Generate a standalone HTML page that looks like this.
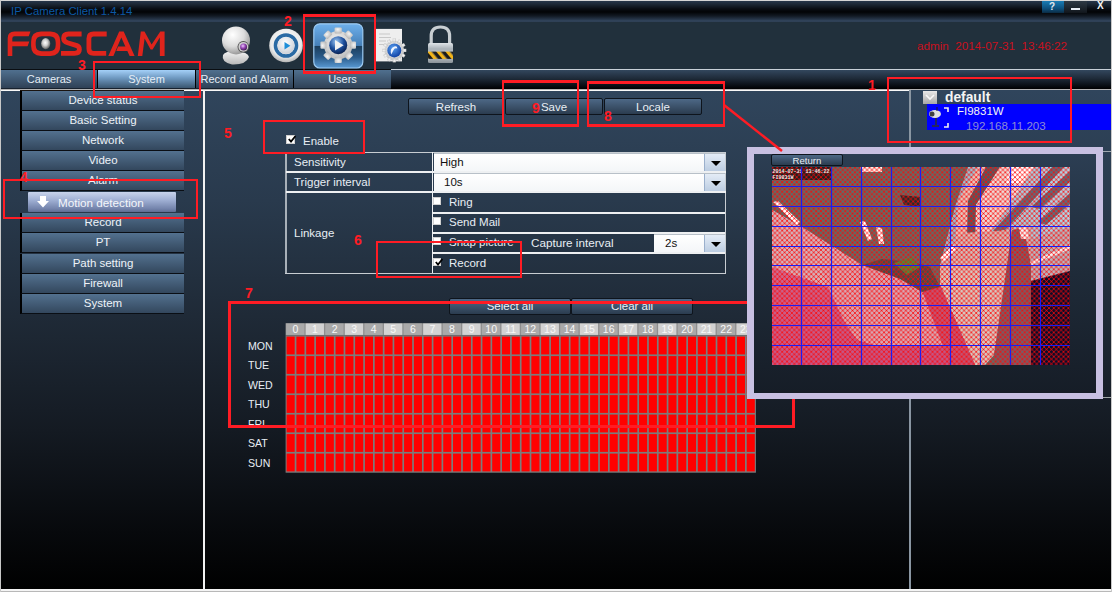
<!DOCTYPE html><html><head><meta charset="utf-8"><style>
*{margin:0;padding:0;box-sizing:border-box}
html,body{width:1112px;height:592px;overflow:hidden;background:#000}
body{position:relative;font-family:"Liberation Sans",sans-serif;font-size:11px;color:#e8eef4}
.a{position:absolute}
.t{position:absolute;white-space:nowrap;line-height:1}
.tab{position:absolute;top:70px;height:18px;background:linear-gradient(#50708f,#2f4156);color:#e6eef6;text-align:center;line-height:18px;font-size:11px;overflow:visible;white-space:nowrap}
.sbtn{position:absolute;left:20px;width:164px;height:20px;background:linear-gradient(#53718f,#33475d);border-left:2px solid #000;border-bottom:1px solid #0a0e14;color:#eef3f8;text-align:center;line-height:19px;font-size:11.5px}
.btn{position:absolute;background:linear-gradient(#4d6886,#2b3c4f);border:1px solid #0e141c;border-radius:2px;color:#e8eef4;text-align:center;font-size:11.5px;white-space:nowrap}
.rb{position:absolute;border:2px solid #ff1c24}
.rn{position:absolute;color:#ff1c24;font-weight:bold;font-size:14px;line-height:1;white-space:nowrap}
.ln{position:absolute;background:#eef0f2}
.sel{position:absolute;background:linear-gradient(#ffffff,#f4f6f8);border-top:1px solid #b8c0c8;color:#101010;font-size:11.5px;line-height:17px}
.dd{position:absolute;top:0;right:0;width:21px;bottom:0;background:linear-gradient(#e4ecf6,#bccde2);border-left:1px solid #9bb0cc}
.dd:after{content:"";position:absolute;left:6px;top:7px;border-left:5px solid transparent;border-right:5px solid transparent;border-top:5px solid #000}
.cb{position:absolute;width:9px;height:9px;background:#fff;border:1px solid #d0d0d0}
.ck{position:absolute;left:1px;top:-1px;width:8px;height:8px}
</style></head><body>
<div class="a" style="left:0;top:90px;width:1112px;height:502px;background:linear-gradient(#30455c 0%,#293a4d 22%,#1f2a37 45%,#141a22 68%,#07090c 88%,#000 100%)"></div>
<div class="a" style="left:0;top:0;width:1112px;height:22px;background:linear-gradient(#293a4f 0px,#1c2836 4px,#080c12 9px,#020406 12px,#121a24 16px,#2a3b50 20px,#34475f 21px,#2a3a4e 22px)"></div>
<div class="t" style="left:11px;top:6px;color:#0b58a4;font-size:11.4px">IP Camera Client 1.4.14</div>
<div class="a" style="left:0;top:22px;width:1112px;height:47px;background:#21303c"></div>
<div class="a" style="left:1042px;top:1px;width:22px;height:12px;background:linear-gradient(#1a7cb4,#0d5280 60%,#0b2c44)"></div>
<div class="t" style="left:1049px;top:2px;color:#e0e8f0;font-size:10px;font-weight:bold">?</div>
<div class="a" style="left:1064px;top:1px;width:23px;height:12px;background:linear-gradient(#2e3a46,#11161c)"></div>
<div class="a" style="left:1071px;top:8px;width:9px;height:2px;background:#e8eef4"></div>
<div class="t" style="left:1097px;top:1px;color:#f4f4f4;font-size:10px;font-weight:bold">X</div>
<svg class="a" style="left:0;top:0" width="170" height="62" viewBox="0 0 170 62">
<defs><radialGradient id="lg" cx="0.45" cy="0.42" r="0.55"><stop offset="0" stop-color="#ffffff"/><stop offset="0.5" stop-color="#d0d0d0"/><stop offset="1" stop-color="#6a6a6a"/></radialGradient></defs>
<g fill="#e0241c">
<path d="M7.7 55.9 L12.3 55.9 L12.3 46.3 L27.6 46.3 L29.3 41.6 L12.3 41.6 L12.3 38.5 Q12.3 36.3 14.5 36.3 L28.7 36.3 L30.5 31.5 L14.5 31.5 Q7.7 31.5 7.7 38 Z"/>
<path fill-rule="evenodd" d="M41 31.5 H50.5 Q60.3 31.5 60.3 41.5 V46 Q60.3 55.9 50.5 55.9 H41 Q31.1 55.9 31.1 46 V41.5 Q31.1 31.5 41 31.5 Z M42 36.2 Q35.7 36.2 35.7 42.5 V45 Q35.7 51.2 42 51.2 H49.5 Q55.7 51.2 55.7 45 V42.5 Q55.7 36.2 49.5 36.2 Z"/>
<path d="M137.8 55.9 L142.3 55.9 L144.6 38.6 L150.6 49.6 L152.6 49.6 L159.8 37.6 L159.9 55.9 L164.6 55.9 L164.6 31.5 L160.3 31.5 L151.6 44.6 L144.5 31.5 L140.8 31.5 Z"/>
<path d="M108.3 55.9 L113.4 55.9 L121.3 37.6 L129.6 55.9 L134.6 55.9 L123.7 31.5 L119.2 31.5 Z"/>
<path d="M116.3 50.9 L118.1 46.6 L127.6 46.6 L129.4 50.9 Z"/>
</g>
<g fill="none" stroke="#e0241c" stroke-width="4.8">
<path d="M81.6 34 H68.5 Q63.6 34 63.6 38.3 Q63.6 41.6 67.5 42.8 L76.8 45.6 Q79.4 46.6 79.4 49.6 Q79.4 53.4 74.5 53.4 H61"/>
<path d="M106.7 34 H93.5 Q88.9 34 88.9 38.6 V48.8 Q88.9 53.4 93.5 53.4 H106.2"/>
</g>
<ellipse cx="45.7" cy="43.6" rx="4.6" ry="5.6" fill="url(#lg)"/>
</svg>
<svg class="a" style="left:215px;top:22px" width="40" height="46" viewBox="215 22 40 46">
<defs><radialGradient id="wc" cx="0.38" cy="0.3" r="0.75"><stop offset="0" stop-color="#ffffff"/><stop offset="0.55" stop-color="#dcdcdc"/><stop offset="1" stop-color="#909090"/></radialGradient>
<linearGradient id="wb" x1="0" y1="0" x2="0" y2="1"><stop offset="0" stop-color="#f4f4f4"/><stop offset="1" stop-color="#b8b8b8"/></linearGradient>
<radialGradient id="wl" cx="0.4" cy="0.35" r="0.7"><stop offset="0" stop-color="#f0c8ff"/><stop offset="0.5" stop-color="#9040b0"/><stop offset="1" stop-color="#3a1848"/></radialGradient></defs>
<path d="M223 55 Q221 62 232 64.5 Q246 65 249 57 Q248 52 236 51 Q225 51 223 55 Z" fill="url(#wb)"/>
<circle cx="236" cy="40.4" r="14" fill="url(#wc)"/>
<circle cx="243.3" cy="46.8" r="5.8" fill="#505050"/><circle cx="243.3" cy="46.8" r="4.9" fill="#d0d0d0"/><circle cx="243.6" cy="47" r="3.5" fill="url(#wl)"/>
</svg>
<svg class="a" style="left:266px;top:26px" width="40" height="40" viewBox="266 26 40 40">
<defs><radialGradient id="pd" cx="0.5" cy="0.4" r="0.6"><stop offset="0" stop-color="#ffffff"/><stop offset="0.75" stop-color="#eaeaea"/><stop offset="1" stop-color="#b4b4b4"/></radialGradient>
<radialGradient id="pi" cx="0.45" cy="0.35" r="0.7"><stop offset="0" stop-color="#ffffff"/><stop offset="1" stop-color="#c8ccd4"/></radialGradient></defs>
<circle cx="286" cy="45.5" r="16.8" fill="url(#pd)"/>
<circle cx="286" cy="45.5" r="10.5" fill="none" stroke="#2a6aa4" stroke-width="3.6"/>
<circle cx="286" cy="45.5" r="8.6" fill="url(#pi)"/>
<path d="M284.5 42 L290.4 45.7 L284.5 49.4 Z" fill="#1e8ed8"/>
</svg>
<svg class="a" style="left:312px;top:22px" width="52" height="48" viewBox="312 22 52 48">
<defs><linearGradient id="gb" x1="0" y1="0" x2="0" y2="1"><stop offset="0" stop-color="#6eb0ec"/><stop offset="0.49" stop-color="#4680b8"/><stop offset="0.51" stop-color="#1c3e5c"/><stop offset="0.75" stop-color="#2a5a88"/><stop offset="1" stop-color="#5a9ad4"/></linearGradient>
<radialGradient id="gc" cx="0.4" cy="0.3" r="0.75"><stop offset="0" stop-color="#9cc8f4"/><stop offset="0.55" stop-color="#1c4e9c"/><stop offset="1" stop-color="#081c48"/></radialGradient>
<radialGradient id="gg" cx="0.45" cy="0.35" r="0.7"><stop offset="0" stop-color="#f4f4f4"/><stop offset="1" stop-color="#b8b8b8"/></radialGradient></defs>
<rect x="313.8" y="23.8" width="49" height="44.2" rx="6" fill="url(#gb)" stroke="#9ccaf2" stroke-width="1.2"/>
<g transform="translate(338.2,45.2)" fill="url(#gg)">
<circle r="14.2"/>
<g id="tooth"><rect x="-3.6" y="-17.8" width="7.2" height="6" rx="1"/></g>
<use href="#tooth" transform="rotate(45)"/><use href="#tooth" transform="rotate(90)"/><use href="#tooth" transform="rotate(135)"/>
<use href="#tooth" transform="rotate(180)"/><use href="#tooth" transform="rotate(225)"/><use href="#tooth" transform="rotate(270)"/><use href="#tooth" transform="rotate(315)"/>
<circle r="9" fill="url(#gc)"/>
<path d="M-3.2 -5.2 L5.5 0 L-3.2 5.2 Z" fill="#f2f2f2"/>
</g>
</svg>
<svg class="a" style="left:372px;top:24px" width="40" height="42" viewBox="372 24 40 42">
<defs><radialGradient id="dg" cx="0.45" cy="0.4" r="0.6"><stop offset="0" stop-color="#f8f8f8"/><stop offset="1" stop-color="#c4c4c4"/></radialGradient>
<radialGradient id="db" cx="0.4" cy="0.35" r="0.7"><stop offset="0" stop-color="#5aa0f0"/><stop offset="1" stop-color="#0c3ca0"/></radialGradient></defs>
<rect x="376" y="28.9" width="26" height="32.5" fill="#eeeeee"/>
<g stroke="#b8b8b8" stroke-width="0.7"><path d="M379 34H390M379 37.5H391M379 41H386M379 44.5H384"/></g>
<g transform="translate(394.3,50.4)" fill="url(#dg)"><circle r="10"/>
<g id="dt"><rect x="-1.6" y="-12" width="3.2" height="4"/></g>
<use href="#dt" transform="rotate(30)"/><use href="#dt" transform="rotate(60)"/><use href="#dt" transform="rotate(90)"/><use href="#dt" transform="rotate(120)"/><use href="#dt" transform="rotate(150)"/><use href="#dt" transform="rotate(180)"/><use href="#dt" transform="rotate(210)"/><use href="#dt" transform="rotate(240)"/><use href="#dt" transform="rotate(270)"/><use href="#dt" transform="rotate(300)"/><use href="#dt" transform="rotate(330)"/>
<circle r="7" fill="url(#db)"/><path d="M-3 4 Q-5 -2 0 -4 Q3 -5 3 -2 Q0 -3 -1 0 Q-2 2 -3 4 Z" fill="#f0f4ff"/></g>
</svg>
<svg class="a" style="left:426px;top:24px" width="30" height="42" viewBox="426 24 30 42">
<defs><linearGradient id="lk" x1="0" y1="0" x2="0" y2="1"><stop offset="0" stop-color="#dfe4e8"/><stop offset="0.3" stop-color="#aab2b8"/><stop offset="0.6" stop-color="#c8ced2"/><stop offset="1" stop-color="#8a9298"/></linearGradient>
<linearGradient id="ls" x1="0" y1="0" x2="1" y2="0"><stop offset="0" stop-color="#c8d0d4"/><stop offset="0.5" stop-color="#eef2f4"/><stop offset="1" stop-color="#a0a8ac"/></linearGradient>
<pattern id="hz" width="7" height="7" patternUnits="userSpaceOnUse" patternTransform="rotate(-40)"><rect width="3.5" height="7" fill="#f2b418"/><rect x="3.5" width="3.5" height="7" fill="#1c1c1c"/></pattern></defs>
<path d="M431.2 44 V36 Q431.2 27 440.5 27 Q449.6 27 449.6 36 V44" fill="none" stroke="#c8ced2" stroke-width="3.2"/>
<rect x="428" y="43" width="25" height="20" rx="1.5" fill="url(#lk)"/>
<rect x="428" y="51.6" width="25" height="7.3" fill="url(#hz)"/>
</svg>
<div class="t" style="left:917px;top:40px;color:#c8101e;font-size:11.7px">admin&nbsp;&nbsp;2014-07-31&nbsp;&nbsp;13:46:22</div>
<div class="a" style="left:0;top:69px;width:391px;height:1px;background:#0a0e12"></div>
<div class="a" style="left:391px;top:69px;width:721px;height:1px;background:#c8d0d8"></div>
<div class="a" style="left:391px;top:70px;width:721px;height:19px;background:linear-gradient(#33475e,#1e2a38 45%,#05080c 90%,#000)"></div>
<div class="tab" style="left:1px;width:96px">Cameras</div>
<div class="a" style="left:97px;top:70px;width:1px;height:18px;background:#000"></div>
<div class="tab" style="left:98px;width:97px;background:linear-gradient(#a4d0f8,#6e98c0 45%,#3a566f)">System</div>
<div class="a" style="left:195px;top:70px;width:1px;height:18px;background:#000"></div>
<div class="tab" style="left:196px;width:97px">Record and Alarm</div>
<div class="a" style="left:293px;top:70px;width:1px;height:18px;background:#000"></div>
<div class="tab" style="left:294px;width:97px">Users</div>
<div class="a" style="left:0;top:88px;width:391px;height:1px;background:#18222e"></div>
<div class="a" style="left:0;top:89px;width:1111px;height:1px;background:#b4b4b4"></div>
<div class="a" style="left:184px;top:90px;width:726px;height:1px;background:#f8f8f8"></div>
<div class="a" style="left:1px;top:90px;width:20px;height:1px;background:#f8f8f8"></div>
<div class="a" style="left:20px;top:90px;width:164px;height:1px;background:#1a1410"></div>
<div class="a" style="left:203px;top:90px;width:2px;height:499px;background:#f2f2f2"></div>
<div class="a" style="left:909px;top:90px;width:2px;height:499px;background:#8a96a2"></div>
<div class="sbtn" style="top:91px">Device status</div>
<div class="sbtn" style="top:111px">Basic Setting</div>
<div class="sbtn" style="top:131px">Network</div>
<div class="sbtn" style="top:151px">Video</div>
<div class="sbtn" style="top:171px">Alarm</div>
<div class="sbtn" style="top:213px">Record</div>
<div class="sbtn" style="top:233px">PT</div>
<div class="sbtn" style="top:254px">Path setting</div>
<div class="sbtn" style="top:274px">Firewall</div>
<div class="sbtn" style="top:294px">System</div>
<div class="a" style="left:28px;top:192px;width:148px;height:20px;background:linear-gradient(#c8d4ec,#a0b0d4 40%,#7282aa 85%,#5c6c90);border-radius:1px"></div>
<svg class="a" style="left:36px;top:195px" width="14" height="14" viewBox="0 0 14 14"><path d="M4 1 H10 V6 H13 L7 12.5 L1 6 H4 Z" fill="#fff"/></svg>
<div class="t" style="left:58px;top:197px;color:#f4f6fa;font-size:11.7px">Motion detection</div>
<div class="a" style="left:0;top:589px;width:1112px;height:2px;background:#f4f4f4"></div>
<div class="a" style="left:0;top:591px;width:1112px;height:1px;background:#b8b8b8"></div>
<div class="a" style="left:0;top:0;width:1112px;height:1px;background:#d4d4d4"></div>
<div class="a" style="left:0;top:0;width:1px;height:592px;background:#c8c8c8"></div>
<div class="a" style="left:1111px;top:0;width:1px;height:592px;background:#c8c8c8"></div>
<div class="btn" style="left:408px;top:98px;width:96px;height:17px;line-height:16px;font-size:11.5px">Refresh</div>
<div class="btn" style="left:505px;top:98px;width:98px;height:17px;line-height:16px;font-size:11.5px">Save</div>
<div class="btn" style="left:604px;top:98px;width:98px;height:17px;line-height:16px;font-size:11.5px">Locale</div>
<div class="cb" style="left:286px;top:135px"><svg class="ck" viewBox="0 0 8 8"><path d="M0.8 4 L3 6.5 L7.5 1" fill="none" stroke="#000" stroke-width="1.8"/></svg></div>
<div class="t" style="left:303px;top:136px;font-size:11.5px">Enable</div>
<div class="a" style="left:285px;top:152px;width:441px;height:1px;background:#c8cdd2"></div>
<div class="a" style="left:285px;top:152px;width:2px;height:122px;background:#a8b0b8"></div>
<div class="a" style="left:725px;top:152px;width:1px;height:122px;background:#c8cdd2"></div>
<div class="a" style="left:285px;top:273px;width:441px;height:1px;background:#c8cdd2"></div>
<div class="a" style="left:432px;top:152px;width:1px;height:121px;background:#eef0f2"></div>
<div class="ln" style="left:286px;top:171px;width:440px;height:2px"></div>
<div class="ln" style="left:286px;top:191px;width:440px;height:2px"></div>
<div class="ln" style="left:432px;top:212px;width:293px;height:2px"></div>
<div class="ln" style="left:432px;top:232px;width:293px;height:2px"></div>
<div class="ln" style="left:432px;top:252px;width:293px;height:2px"></div>
<div class="t" style="left:294px;top:157px;font-size:11.5px">Sensitivity</div>
<div class="t" style="left:294px;top:177px;font-size:11.5px">Trigger interval</div>
<div class="t" style="left:294px;top:228px;font-size:11.5px">Linkage</div>
<div class="sel" style="left:434px;top:153px;width:291px;height:18px"><span style="position:absolute;left:6px;top:0">High</span><div class="dd"></div></div>
<div class="sel" style="left:434px;top:173px;width:291px;height:18px"><span style="position:absolute;left:10px;top:0">10s</span><div class="dd"></div></div>
<div class="sel" style="left:654px;top:234px;width:71px;height:18px"><span style="position:absolute;left:11px;top:0">2s</span><div class="dd"></div></div>
<div class="cb" style="left:433px;top:197px;width:8px;height:8px"></div>
<div class="t" style="left:449px;top:197px;font-size:11.5px">Ring</div>
<div class="cb" style="left:433px;top:217px;width:8px;height:8px"></div>
<div class="t" style="left:449px;top:217px;font-size:11.5px">Send Mail</div>
<div class="cb" style="left:433px;top:237px;width:8px;height:8px"></div>
<div class="t" style="left:449px;top:237px;font-size:11.5px">Snap picture</div>
<div class="cb" style="left:433px;top:258px;width:8px;height:8px"><svg class="ck" viewBox="0 0 8 8"><path d="M0.8 4 L3 6.5 L7.5 1" fill="none" stroke="#000" stroke-width="1.8"/></svg></div>
<div class="t" style="left:449px;top:258px;font-size:11.5px">Record</div>
<div class="t" style="left:531px;top:237px;font-size:11.7px">Capture interval</div>
<div class="btn" style="left:449px;top:298px;width:122px;height:17px;line-height:15px;font-size:11.5px">Select all</div>
<div class="btn" style="left:571px;top:298px;width:122px;height:17px;line-height:15px;font-size:11.5px">Clear all</div>
<svg class="a" style="left:0;top:0" width="1112" height="592" viewBox="0 0 1112 592"><rect x="285.6" y="323.2" width="469.91999999999996" height="12" fill="#8e8e8e"/><rect x="286.10" y="323.5" width="18.28" height="11.4" fill="#a9a9a9"/><text x="295.39" y="333.4" font-family="Liberation Sans" font-size="10.5" fill="#f8f8f8" text-anchor="middle">0</text><rect x="305.68" y="323.5" width="18.28" height="11.4" fill="#d2d2d2"/><text x="314.97" y="333.4" font-family="Liberation Sans" font-size="10.5" fill="#f8f8f8" text-anchor="middle">1</text><rect x="325.26" y="323.5" width="18.28" height="11.4" fill="#a9a9a9"/><text x="334.55" y="333.4" font-family="Liberation Sans" font-size="10.5" fill="#f8f8f8" text-anchor="middle">2</text><rect x="344.84" y="323.5" width="18.28" height="11.4" fill="#d2d2d2"/><text x="354.13" y="333.4" font-family="Liberation Sans" font-size="10.5" fill="#f8f8f8" text-anchor="middle">3</text><rect x="364.42" y="323.5" width="18.28" height="11.4" fill="#a9a9a9"/><text x="373.71" y="333.4" font-family="Liberation Sans" font-size="10.5" fill="#f8f8f8" text-anchor="middle">4</text><rect x="384.00" y="323.5" width="18.28" height="11.4" fill="#d2d2d2"/><text x="393.29" y="333.4" font-family="Liberation Sans" font-size="10.5" fill="#f8f8f8" text-anchor="middle">5</text><rect x="403.58" y="323.5" width="18.28" height="11.4" fill="#a9a9a9"/><text x="412.87" y="333.4" font-family="Liberation Sans" font-size="10.5" fill="#f8f8f8" text-anchor="middle">6</text><rect x="423.16" y="323.5" width="18.28" height="11.4" fill="#d2d2d2"/><text x="432.45" y="333.4" font-family="Liberation Sans" font-size="10.5" fill="#f8f8f8" text-anchor="middle">7</text><rect x="442.74" y="323.5" width="18.28" height="11.4" fill="#a9a9a9"/><text x="452.03" y="333.4" font-family="Liberation Sans" font-size="10.5" fill="#f8f8f8" text-anchor="middle">8</text><rect x="462.32" y="323.5" width="18.28" height="11.4" fill="#d2d2d2"/><text x="471.61" y="333.4" font-family="Liberation Sans" font-size="10.5" fill="#f8f8f8" text-anchor="middle">9</text><rect x="481.90" y="323.5" width="18.28" height="11.4" fill="#a9a9a9"/><text x="491.19" y="333.4" font-family="Liberation Sans" font-size="10.5" fill="#f8f8f8" text-anchor="middle">10</text><rect x="501.48" y="323.5" width="18.28" height="11.4" fill="#d2d2d2"/><text x="510.77" y="333.4" font-family="Liberation Sans" font-size="10.5" fill="#f8f8f8" text-anchor="middle">11</text><rect x="521.06" y="323.5" width="18.28" height="11.4" fill="#a9a9a9"/><text x="530.35" y="333.4" font-family="Liberation Sans" font-size="10.5" fill="#f8f8f8" text-anchor="middle">12</text><rect x="540.64" y="323.5" width="18.28" height="11.4" fill="#d2d2d2"/><text x="549.93" y="333.4" font-family="Liberation Sans" font-size="10.5" fill="#f8f8f8" text-anchor="middle">13</text><rect x="560.22" y="323.5" width="18.28" height="11.4" fill="#a9a9a9"/><text x="569.51" y="333.4" font-family="Liberation Sans" font-size="10.5" fill="#f8f8f8" text-anchor="middle">14</text><rect x="579.80" y="323.5" width="18.28" height="11.4" fill="#d2d2d2"/><text x="589.09" y="333.4" font-family="Liberation Sans" font-size="10.5" fill="#f8f8f8" text-anchor="middle">15</text><rect x="599.38" y="323.5" width="18.28" height="11.4" fill="#a9a9a9"/><text x="608.67" y="333.4" font-family="Liberation Sans" font-size="10.5" fill="#f8f8f8" text-anchor="middle">16</text><rect x="618.96" y="323.5" width="18.28" height="11.4" fill="#d2d2d2"/><text x="628.25" y="333.4" font-family="Liberation Sans" font-size="10.5" fill="#f8f8f8" text-anchor="middle">17</text><rect x="638.54" y="323.5" width="18.28" height="11.4" fill="#a9a9a9"/><text x="647.83" y="333.4" font-family="Liberation Sans" font-size="10.5" fill="#f8f8f8" text-anchor="middle">18</text><rect x="658.12" y="323.5" width="18.28" height="11.4" fill="#d2d2d2"/><text x="667.41" y="333.4" font-family="Liberation Sans" font-size="10.5" fill="#f8f8f8" text-anchor="middle">19</text><rect x="677.70" y="323.5" width="18.28" height="11.4" fill="#a9a9a9"/><text x="686.99" y="333.4" font-family="Liberation Sans" font-size="10.5" fill="#f8f8f8" text-anchor="middle">20</text><rect x="697.28" y="323.5" width="18.28" height="11.4" fill="#d2d2d2"/><text x="706.57" y="333.4" font-family="Liberation Sans" font-size="10.5" fill="#f8f8f8" text-anchor="middle">21</text><rect x="716.86" y="323.5" width="18.28" height="11.4" fill="#a9a9a9"/><text x="726.15" y="333.4" font-family="Liberation Sans" font-size="10.5" fill="#f8f8f8" text-anchor="middle">22</text><rect x="736.44" y="323.5" width="18.28" height="11.4" fill="#d2d2d2"/><text x="745.73" y="333.4" font-family="Liberation Sans" font-size="10.5" fill="#f8f8f8" text-anchor="middle">23</text><rect x="285.6" y="335.2" width="470.31999999999994" height="137.5" fill="#7c7c7c"/><rect x="286.60" y="336.60" width="8.09" height="17.80" fill="#ff0000"/><rect x="296.39" y="336.60" width="8.09" height="17.80" fill="#ff0000"/><rect x="306.18" y="336.60" width="8.09" height="17.80" fill="#ff0000"/><rect x="315.97" y="336.60" width="8.09" height="17.80" fill="#ff0000"/><rect x="325.76" y="336.60" width="8.09" height="17.80" fill="#ff0000"/><rect x="335.55" y="336.60" width="8.09" height="17.80" fill="#ff0000"/><rect x="345.34" y="336.60" width="8.09" height="17.80" fill="#ff0000"/><rect x="355.13" y="336.60" width="8.09" height="17.80" fill="#ff0000"/><rect x="364.92" y="336.60" width="8.09" height="17.80" fill="#ff0000"/><rect x="374.71" y="336.60" width="8.09" height="17.80" fill="#ff0000"/><rect x="384.50" y="336.60" width="8.09" height="17.80" fill="#ff0000"/><rect x="394.29" y="336.60" width="8.09" height="17.80" fill="#ff0000"/><rect x="404.08" y="336.60" width="8.09" height="17.80" fill="#ff0000"/><rect x="413.87" y="336.60" width="8.09" height="17.80" fill="#ff0000"/><rect x="423.66" y="336.60" width="8.09" height="17.80" fill="#ff0000"/><rect x="433.45" y="336.60" width="8.09" height="17.80" fill="#ff0000"/><rect x="443.24" y="336.60" width="8.09" height="17.80" fill="#ff0000"/><rect x="453.03" y="336.60" width="8.09" height="17.80" fill="#ff0000"/><rect x="462.82" y="336.60" width="8.09" height="17.80" fill="#ff0000"/><rect x="472.61" y="336.60" width="8.09" height="17.80" fill="#ff0000"/><rect x="482.40" y="336.60" width="8.09" height="17.80" fill="#ff0000"/><rect x="492.19" y="336.60" width="8.09" height="17.80" fill="#ff0000"/><rect x="501.98" y="336.60" width="8.09" height="17.80" fill="#ff0000"/><rect x="511.77" y="336.60" width="8.09" height="17.80" fill="#ff0000"/><rect x="521.56" y="336.60" width="8.09" height="17.80" fill="#ff0000"/><rect x="531.35" y="336.60" width="8.09" height="17.80" fill="#ff0000"/><rect x="541.14" y="336.60" width="8.09" height="17.80" fill="#ff0000"/><rect x="550.93" y="336.60" width="8.09" height="17.80" fill="#ff0000"/><rect x="560.72" y="336.60" width="8.09" height="17.80" fill="#ff0000"/><rect x="570.51" y="336.60" width="8.09" height="17.80" fill="#ff0000"/><rect x="580.30" y="336.60" width="8.09" height="17.80" fill="#ff0000"/><rect x="590.09" y="336.60" width="8.09" height="17.80" fill="#ff0000"/><rect x="599.88" y="336.60" width="8.09" height="17.80" fill="#ff0000"/><rect x="609.67" y="336.60" width="8.09" height="17.80" fill="#ff0000"/><rect x="619.46" y="336.60" width="8.09" height="17.80" fill="#ff0000"/><rect x="629.25" y="336.60" width="8.09" height="17.80" fill="#ff0000"/><rect x="639.04" y="336.60" width="8.09" height="17.80" fill="#ff0000"/><rect x="648.83" y="336.60" width="8.09" height="17.80" fill="#ff0000"/><rect x="658.62" y="336.60" width="8.09" height="17.80" fill="#ff0000"/><rect x="668.41" y="336.60" width="8.09" height="17.80" fill="#ff0000"/><rect x="678.20" y="336.60" width="8.09" height="17.80" fill="#ff0000"/><rect x="687.99" y="336.60" width="8.09" height="17.80" fill="#ff0000"/><rect x="697.78" y="336.60" width="8.09" height="17.80" fill="#ff0000"/><rect x="707.57" y="336.60" width="8.09" height="17.80" fill="#ff0000"/><rect x="717.36" y="336.60" width="8.09" height="17.80" fill="#ff0000"/><rect x="727.15" y="336.60" width="8.09" height="17.80" fill="#ff0000"/><rect x="736.94" y="336.60" width="8.09" height="17.80" fill="#ff0000"/><rect x="746.73" y="336.60" width="8.09" height="17.80" fill="#ff0000"/><rect x="286.60" y="356.10" width="8.09" height="17.80" fill="#ff0000"/><rect x="296.39" y="356.10" width="8.09" height="17.80" fill="#ff0000"/><rect x="306.18" y="356.10" width="8.09" height="17.80" fill="#ff0000"/><rect x="315.97" y="356.10" width="8.09" height="17.80" fill="#ff0000"/><rect x="325.76" y="356.10" width="8.09" height="17.80" fill="#ff0000"/><rect x="335.55" y="356.10" width="8.09" height="17.80" fill="#ff0000"/><rect x="345.34" y="356.10" width="8.09" height="17.80" fill="#ff0000"/><rect x="355.13" y="356.10" width="8.09" height="17.80" fill="#ff0000"/><rect x="364.92" y="356.10" width="8.09" height="17.80" fill="#ff0000"/><rect x="374.71" y="356.10" width="8.09" height="17.80" fill="#ff0000"/><rect x="384.50" y="356.10" width="8.09" height="17.80" fill="#ff0000"/><rect x="394.29" y="356.10" width="8.09" height="17.80" fill="#ff0000"/><rect x="404.08" y="356.10" width="8.09" height="17.80" fill="#ff0000"/><rect x="413.87" y="356.10" width="8.09" height="17.80" fill="#ff0000"/><rect x="423.66" y="356.10" width="8.09" height="17.80" fill="#ff0000"/><rect x="433.45" y="356.10" width="8.09" height="17.80" fill="#ff0000"/><rect x="443.24" y="356.10" width="8.09" height="17.80" fill="#ff0000"/><rect x="453.03" y="356.10" width="8.09" height="17.80" fill="#ff0000"/><rect x="462.82" y="356.10" width="8.09" height="17.80" fill="#ff0000"/><rect x="472.61" y="356.10" width="8.09" height="17.80" fill="#ff0000"/><rect x="482.40" y="356.10" width="8.09" height="17.80" fill="#ff0000"/><rect x="492.19" y="356.10" width="8.09" height="17.80" fill="#ff0000"/><rect x="501.98" y="356.10" width="8.09" height="17.80" fill="#ff0000"/><rect x="511.77" y="356.10" width="8.09" height="17.80" fill="#ff0000"/><rect x="521.56" y="356.10" width="8.09" height="17.80" fill="#ff0000"/><rect x="531.35" y="356.10" width="8.09" height="17.80" fill="#ff0000"/><rect x="541.14" y="356.10" width="8.09" height="17.80" fill="#ff0000"/><rect x="550.93" y="356.10" width="8.09" height="17.80" fill="#ff0000"/><rect x="560.72" y="356.10" width="8.09" height="17.80" fill="#ff0000"/><rect x="570.51" y="356.10" width="8.09" height="17.80" fill="#ff0000"/><rect x="580.30" y="356.10" width="8.09" height="17.80" fill="#ff0000"/><rect x="590.09" y="356.10" width="8.09" height="17.80" fill="#ff0000"/><rect x="599.88" y="356.10" width="8.09" height="17.80" fill="#ff0000"/><rect x="609.67" y="356.10" width="8.09" height="17.80" fill="#ff0000"/><rect x="619.46" y="356.10" width="8.09" height="17.80" fill="#ff0000"/><rect x="629.25" y="356.10" width="8.09" height="17.80" fill="#ff0000"/><rect x="639.04" y="356.10" width="8.09" height="17.80" fill="#ff0000"/><rect x="648.83" y="356.10" width="8.09" height="17.80" fill="#ff0000"/><rect x="658.62" y="356.10" width="8.09" height="17.80" fill="#ff0000"/><rect x="668.41" y="356.10" width="8.09" height="17.80" fill="#ff0000"/><rect x="678.20" y="356.10" width="8.09" height="17.80" fill="#ff0000"/><rect x="687.99" y="356.10" width="8.09" height="17.80" fill="#ff0000"/><rect x="697.78" y="356.10" width="8.09" height="17.80" fill="#ff0000"/><rect x="707.57" y="356.10" width="8.09" height="17.80" fill="#ff0000"/><rect x="717.36" y="356.10" width="8.09" height="17.80" fill="#ff0000"/><rect x="727.15" y="356.10" width="8.09" height="17.80" fill="#ff0000"/><rect x="736.94" y="356.10" width="8.09" height="17.80" fill="#ff0000"/><rect x="746.73" y="356.10" width="8.09" height="17.80" fill="#ff0000"/><rect x="286.60" y="375.60" width="8.09" height="17.80" fill="#ff0000"/><rect x="296.39" y="375.60" width="8.09" height="17.80" fill="#ff0000"/><rect x="306.18" y="375.60" width="8.09" height="17.80" fill="#ff0000"/><rect x="315.97" y="375.60" width="8.09" height="17.80" fill="#ff0000"/><rect x="325.76" y="375.60" width="8.09" height="17.80" fill="#ff0000"/><rect x="335.55" y="375.60" width="8.09" height="17.80" fill="#ff0000"/><rect x="345.34" y="375.60" width="8.09" height="17.80" fill="#ff0000"/><rect x="355.13" y="375.60" width="8.09" height="17.80" fill="#ff0000"/><rect x="364.92" y="375.60" width="8.09" height="17.80" fill="#ff0000"/><rect x="374.71" y="375.60" width="8.09" height="17.80" fill="#ff0000"/><rect x="384.50" y="375.60" width="8.09" height="17.80" fill="#ff0000"/><rect x="394.29" y="375.60" width="8.09" height="17.80" fill="#ff0000"/><rect x="404.08" y="375.60" width="8.09" height="17.80" fill="#ff0000"/><rect x="413.87" y="375.60" width="8.09" height="17.80" fill="#ff0000"/><rect x="423.66" y="375.60" width="8.09" height="17.80" fill="#ff0000"/><rect x="433.45" y="375.60" width="8.09" height="17.80" fill="#ff0000"/><rect x="443.24" y="375.60" width="8.09" height="17.80" fill="#ff0000"/><rect x="453.03" y="375.60" width="8.09" height="17.80" fill="#ff0000"/><rect x="462.82" y="375.60" width="8.09" height="17.80" fill="#ff0000"/><rect x="472.61" y="375.60" width="8.09" height="17.80" fill="#ff0000"/><rect x="482.40" y="375.60" width="8.09" height="17.80" fill="#ff0000"/><rect x="492.19" y="375.60" width="8.09" height="17.80" fill="#ff0000"/><rect x="501.98" y="375.60" width="8.09" height="17.80" fill="#ff0000"/><rect x="511.77" y="375.60" width="8.09" height="17.80" fill="#ff0000"/><rect x="521.56" y="375.60" width="8.09" height="17.80" fill="#ff0000"/><rect x="531.35" y="375.60" width="8.09" height="17.80" fill="#ff0000"/><rect x="541.14" y="375.60" width="8.09" height="17.80" fill="#ff0000"/><rect x="550.93" y="375.60" width="8.09" height="17.80" fill="#ff0000"/><rect x="560.72" y="375.60" width="8.09" height="17.80" fill="#ff0000"/><rect x="570.51" y="375.60" width="8.09" height="17.80" fill="#ff0000"/><rect x="580.30" y="375.60" width="8.09" height="17.80" fill="#ff0000"/><rect x="590.09" y="375.60" width="8.09" height="17.80" fill="#ff0000"/><rect x="599.88" y="375.60" width="8.09" height="17.80" fill="#ff0000"/><rect x="609.67" y="375.60" width="8.09" height="17.80" fill="#ff0000"/><rect x="619.46" y="375.60" width="8.09" height="17.80" fill="#ff0000"/><rect x="629.25" y="375.60" width="8.09" height="17.80" fill="#ff0000"/><rect x="639.04" y="375.60" width="8.09" height="17.80" fill="#ff0000"/><rect x="648.83" y="375.60" width="8.09" height="17.80" fill="#ff0000"/><rect x="658.62" y="375.60" width="8.09" height="17.80" fill="#ff0000"/><rect x="668.41" y="375.60" width="8.09" height="17.80" fill="#ff0000"/><rect x="678.20" y="375.60" width="8.09" height="17.80" fill="#ff0000"/><rect x="687.99" y="375.60" width="8.09" height="17.80" fill="#ff0000"/><rect x="697.78" y="375.60" width="8.09" height="17.80" fill="#ff0000"/><rect x="707.57" y="375.60" width="8.09" height="17.80" fill="#ff0000"/><rect x="717.36" y="375.60" width="8.09" height="17.80" fill="#ff0000"/><rect x="727.15" y="375.60" width="8.09" height="17.80" fill="#ff0000"/><rect x="736.94" y="375.60" width="8.09" height="17.80" fill="#ff0000"/><rect x="746.73" y="375.60" width="8.09" height="17.80" fill="#ff0000"/><rect x="286.60" y="395.10" width="8.09" height="17.80" fill="#ff0000"/><rect x="296.39" y="395.10" width="8.09" height="17.80" fill="#ff0000"/><rect x="306.18" y="395.10" width="8.09" height="17.80" fill="#ff0000"/><rect x="315.97" y="395.10" width="8.09" height="17.80" fill="#ff0000"/><rect x="325.76" y="395.10" width="8.09" height="17.80" fill="#ff0000"/><rect x="335.55" y="395.10" width="8.09" height="17.80" fill="#ff0000"/><rect x="345.34" y="395.10" width="8.09" height="17.80" fill="#ff0000"/><rect x="355.13" y="395.10" width="8.09" height="17.80" fill="#ff0000"/><rect x="364.92" y="395.10" width="8.09" height="17.80" fill="#ff0000"/><rect x="374.71" y="395.10" width="8.09" height="17.80" fill="#ff0000"/><rect x="384.50" y="395.10" width="8.09" height="17.80" fill="#ff0000"/><rect x="394.29" y="395.10" width="8.09" height="17.80" fill="#ff0000"/><rect x="404.08" y="395.10" width="8.09" height="17.80" fill="#ff0000"/><rect x="413.87" y="395.10" width="8.09" height="17.80" fill="#ff0000"/><rect x="423.66" y="395.10" width="8.09" height="17.80" fill="#ff0000"/><rect x="433.45" y="395.10" width="8.09" height="17.80" fill="#ff0000"/><rect x="443.24" y="395.10" width="8.09" height="17.80" fill="#ff0000"/><rect x="453.03" y="395.10" width="8.09" height="17.80" fill="#ff0000"/><rect x="462.82" y="395.10" width="8.09" height="17.80" fill="#ff0000"/><rect x="472.61" y="395.10" width="8.09" height="17.80" fill="#ff0000"/><rect x="482.40" y="395.10" width="8.09" height="17.80" fill="#ff0000"/><rect x="492.19" y="395.10" width="8.09" height="17.80" fill="#ff0000"/><rect x="501.98" y="395.10" width="8.09" height="17.80" fill="#ff0000"/><rect x="511.77" y="395.10" width="8.09" height="17.80" fill="#ff0000"/><rect x="521.56" y="395.10" width="8.09" height="17.80" fill="#ff0000"/><rect x="531.35" y="395.10" width="8.09" height="17.80" fill="#ff0000"/><rect x="541.14" y="395.10" width="8.09" height="17.80" fill="#ff0000"/><rect x="550.93" y="395.10" width="8.09" height="17.80" fill="#ff0000"/><rect x="560.72" y="395.10" width="8.09" height="17.80" fill="#ff0000"/><rect x="570.51" y="395.10" width="8.09" height="17.80" fill="#ff0000"/><rect x="580.30" y="395.10" width="8.09" height="17.80" fill="#ff0000"/><rect x="590.09" y="395.10" width="8.09" height="17.80" fill="#ff0000"/><rect x="599.88" y="395.10" width="8.09" height="17.80" fill="#ff0000"/><rect x="609.67" y="395.10" width="8.09" height="17.80" fill="#ff0000"/><rect x="619.46" y="395.10" width="8.09" height="17.80" fill="#ff0000"/><rect x="629.25" y="395.10" width="8.09" height="17.80" fill="#ff0000"/><rect x="639.04" y="395.10" width="8.09" height="17.80" fill="#ff0000"/><rect x="648.83" y="395.10" width="8.09" height="17.80" fill="#ff0000"/><rect x="658.62" y="395.10" width="8.09" height="17.80" fill="#ff0000"/><rect x="668.41" y="395.10" width="8.09" height="17.80" fill="#ff0000"/><rect x="678.20" y="395.10" width="8.09" height="17.80" fill="#ff0000"/><rect x="687.99" y="395.10" width="8.09" height="17.80" fill="#ff0000"/><rect x="697.78" y="395.10" width="8.09" height="17.80" fill="#ff0000"/><rect x="707.57" y="395.10" width="8.09" height="17.80" fill="#ff0000"/><rect x="717.36" y="395.10" width="8.09" height="17.80" fill="#ff0000"/><rect x="727.15" y="395.10" width="8.09" height="17.80" fill="#ff0000"/><rect x="736.94" y="395.10" width="8.09" height="17.80" fill="#ff0000"/><rect x="746.73" y="395.10" width="8.09" height="17.80" fill="#ff0000"/><rect x="286.60" y="414.60" width="8.09" height="17.80" fill="#ff0000"/><rect x="296.39" y="414.60" width="8.09" height="17.80" fill="#ff0000"/><rect x="306.18" y="414.60" width="8.09" height="17.80" fill="#ff0000"/><rect x="315.97" y="414.60" width="8.09" height="17.80" fill="#ff0000"/><rect x="325.76" y="414.60" width="8.09" height="17.80" fill="#ff0000"/><rect x="335.55" y="414.60" width="8.09" height="17.80" fill="#ff0000"/><rect x="345.34" y="414.60" width="8.09" height="17.80" fill="#ff0000"/><rect x="355.13" y="414.60" width="8.09" height="17.80" fill="#ff0000"/><rect x="364.92" y="414.60" width="8.09" height="17.80" fill="#ff0000"/><rect x="374.71" y="414.60" width="8.09" height="17.80" fill="#ff0000"/><rect x="384.50" y="414.60" width="8.09" height="17.80" fill="#ff0000"/><rect x="394.29" y="414.60" width="8.09" height="17.80" fill="#ff0000"/><rect x="404.08" y="414.60" width="8.09" height="17.80" fill="#ff0000"/><rect x="413.87" y="414.60" width="8.09" height="17.80" fill="#ff0000"/><rect x="423.66" y="414.60" width="8.09" height="17.80" fill="#ff0000"/><rect x="433.45" y="414.60" width="8.09" height="17.80" fill="#ff0000"/><rect x="443.24" y="414.60" width="8.09" height="17.80" fill="#ff0000"/><rect x="453.03" y="414.60" width="8.09" height="17.80" fill="#ff0000"/><rect x="462.82" y="414.60" width="8.09" height="17.80" fill="#ff0000"/><rect x="472.61" y="414.60" width="8.09" height="17.80" fill="#ff0000"/><rect x="482.40" y="414.60" width="8.09" height="17.80" fill="#ff0000"/><rect x="492.19" y="414.60" width="8.09" height="17.80" fill="#ff0000"/><rect x="501.98" y="414.60" width="8.09" height="17.80" fill="#ff0000"/><rect x="511.77" y="414.60" width="8.09" height="17.80" fill="#ff0000"/><rect x="521.56" y="414.60" width="8.09" height="17.80" fill="#ff0000"/><rect x="531.35" y="414.60" width="8.09" height="17.80" fill="#ff0000"/><rect x="541.14" y="414.60" width="8.09" height="17.80" fill="#ff0000"/><rect x="550.93" y="414.60" width="8.09" height="17.80" fill="#ff0000"/><rect x="560.72" y="414.60" width="8.09" height="17.80" fill="#ff0000"/><rect x="570.51" y="414.60" width="8.09" height="17.80" fill="#ff0000"/><rect x="580.30" y="414.60" width="8.09" height="17.80" fill="#ff0000"/><rect x="590.09" y="414.60" width="8.09" height="17.80" fill="#ff0000"/><rect x="599.88" y="414.60" width="8.09" height="17.80" fill="#ff0000"/><rect x="609.67" y="414.60" width="8.09" height="17.80" fill="#ff0000"/><rect x="619.46" y="414.60" width="8.09" height="17.80" fill="#ff0000"/><rect x="629.25" y="414.60" width="8.09" height="17.80" fill="#ff0000"/><rect x="639.04" y="414.60" width="8.09" height="17.80" fill="#ff0000"/><rect x="648.83" y="414.60" width="8.09" height="17.80" fill="#ff0000"/><rect x="658.62" y="414.60" width="8.09" height="17.80" fill="#ff0000"/><rect x="668.41" y="414.60" width="8.09" height="17.80" fill="#ff0000"/><rect x="678.20" y="414.60" width="8.09" height="17.80" fill="#ff0000"/><rect x="687.99" y="414.60" width="8.09" height="17.80" fill="#ff0000"/><rect x="697.78" y="414.60" width="8.09" height="17.80" fill="#ff0000"/><rect x="707.57" y="414.60" width="8.09" height="17.80" fill="#ff0000"/><rect x="717.36" y="414.60" width="8.09" height="17.80" fill="#ff0000"/><rect x="727.15" y="414.60" width="8.09" height="17.80" fill="#ff0000"/><rect x="736.94" y="414.60" width="8.09" height="17.80" fill="#ff0000"/><rect x="746.73" y="414.60" width="8.09" height="17.80" fill="#ff0000"/><rect x="286.60" y="434.10" width="8.09" height="17.80" fill="#ff0000"/><rect x="296.39" y="434.10" width="8.09" height="17.80" fill="#ff0000"/><rect x="306.18" y="434.10" width="8.09" height="17.80" fill="#ff0000"/><rect x="315.97" y="434.10" width="8.09" height="17.80" fill="#ff0000"/><rect x="325.76" y="434.10" width="8.09" height="17.80" fill="#ff0000"/><rect x="335.55" y="434.10" width="8.09" height="17.80" fill="#ff0000"/><rect x="345.34" y="434.10" width="8.09" height="17.80" fill="#ff0000"/><rect x="355.13" y="434.10" width="8.09" height="17.80" fill="#ff0000"/><rect x="364.92" y="434.10" width="8.09" height="17.80" fill="#ff0000"/><rect x="374.71" y="434.10" width="8.09" height="17.80" fill="#ff0000"/><rect x="384.50" y="434.10" width="8.09" height="17.80" fill="#ff0000"/><rect x="394.29" y="434.10" width="8.09" height="17.80" fill="#ff0000"/><rect x="404.08" y="434.10" width="8.09" height="17.80" fill="#ff0000"/><rect x="413.87" y="434.10" width="8.09" height="17.80" fill="#ff0000"/><rect x="423.66" y="434.10" width="8.09" height="17.80" fill="#ff0000"/><rect x="433.45" y="434.10" width="8.09" height="17.80" fill="#ff0000"/><rect x="443.24" y="434.10" width="8.09" height="17.80" fill="#ff0000"/><rect x="453.03" y="434.10" width="8.09" height="17.80" fill="#ff0000"/><rect x="462.82" y="434.10" width="8.09" height="17.80" fill="#ff0000"/><rect x="472.61" y="434.10" width="8.09" height="17.80" fill="#ff0000"/><rect x="482.40" y="434.10" width="8.09" height="17.80" fill="#ff0000"/><rect x="492.19" y="434.10" width="8.09" height="17.80" fill="#ff0000"/><rect x="501.98" y="434.10" width="8.09" height="17.80" fill="#ff0000"/><rect x="511.77" y="434.10" width="8.09" height="17.80" fill="#ff0000"/><rect x="521.56" y="434.10" width="8.09" height="17.80" fill="#ff0000"/><rect x="531.35" y="434.10" width="8.09" height="17.80" fill="#ff0000"/><rect x="541.14" y="434.10" width="8.09" height="17.80" fill="#ff0000"/><rect x="550.93" y="434.10" width="8.09" height="17.80" fill="#ff0000"/><rect x="560.72" y="434.10" width="8.09" height="17.80" fill="#ff0000"/><rect x="570.51" y="434.10" width="8.09" height="17.80" fill="#ff0000"/><rect x="580.30" y="434.10" width="8.09" height="17.80" fill="#ff0000"/><rect x="590.09" y="434.10" width="8.09" height="17.80" fill="#ff0000"/><rect x="599.88" y="434.10" width="8.09" height="17.80" fill="#ff0000"/><rect x="609.67" y="434.10" width="8.09" height="17.80" fill="#ff0000"/><rect x="619.46" y="434.10" width="8.09" height="17.80" fill="#ff0000"/><rect x="629.25" y="434.10" width="8.09" height="17.80" fill="#ff0000"/><rect x="639.04" y="434.10" width="8.09" height="17.80" fill="#ff0000"/><rect x="648.83" y="434.10" width="8.09" height="17.80" fill="#ff0000"/><rect x="658.62" y="434.10" width="8.09" height="17.80" fill="#ff0000"/><rect x="668.41" y="434.10" width="8.09" height="17.80" fill="#ff0000"/><rect x="678.20" y="434.10" width="8.09" height="17.80" fill="#ff0000"/><rect x="687.99" y="434.10" width="8.09" height="17.80" fill="#ff0000"/><rect x="697.78" y="434.10" width="8.09" height="17.80" fill="#ff0000"/><rect x="707.57" y="434.10" width="8.09" height="17.80" fill="#ff0000"/><rect x="717.36" y="434.10" width="8.09" height="17.80" fill="#ff0000"/><rect x="727.15" y="434.10" width="8.09" height="17.80" fill="#ff0000"/><rect x="736.94" y="434.10" width="8.09" height="17.80" fill="#ff0000"/><rect x="746.73" y="434.10" width="8.09" height="17.80" fill="#ff0000"/><rect x="286.60" y="453.60" width="8.09" height="17.80" fill="#ff0000"/><rect x="296.39" y="453.60" width="8.09" height="17.80" fill="#ff0000"/><rect x="306.18" y="453.60" width="8.09" height="17.80" fill="#ff0000"/><rect x="315.97" y="453.60" width="8.09" height="17.80" fill="#ff0000"/><rect x="325.76" y="453.60" width="8.09" height="17.80" fill="#ff0000"/><rect x="335.55" y="453.60" width="8.09" height="17.80" fill="#ff0000"/><rect x="345.34" y="453.60" width="8.09" height="17.80" fill="#ff0000"/><rect x="355.13" y="453.60" width="8.09" height="17.80" fill="#ff0000"/><rect x="364.92" y="453.60" width="8.09" height="17.80" fill="#ff0000"/><rect x="374.71" y="453.60" width="8.09" height="17.80" fill="#ff0000"/><rect x="384.50" y="453.60" width="8.09" height="17.80" fill="#ff0000"/><rect x="394.29" y="453.60" width="8.09" height="17.80" fill="#ff0000"/><rect x="404.08" y="453.60" width="8.09" height="17.80" fill="#ff0000"/><rect x="413.87" y="453.60" width="8.09" height="17.80" fill="#ff0000"/><rect x="423.66" y="453.60" width="8.09" height="17.80" fill="#ff0000"/><rect x="433.45" y="453.60" width="8.09" height="17.80" fill="#ff0000"/><rect x="443.24" y="453.60" width="8.09" height="17.80" fill="#ff0000"/><rect x="453.03" y="453.60" width="8.09" height="17.80" fill="#ff0000"/><rect x="462.82" y="453.60" width="8.09" height="17.80" fill="#ff0000"/><rect x="472.61" y="453.60" width="8.09" height="17.80" fill="#ff0000"/><rect x="482.40" y="453.60" width="8.09" height="17.80" fill="#ff0000"/><rect x="492.19" y="453.60" width="8.09" height="17.80" fill="#ff0000"/><rect x="501.98" y="453.60" width="8.09" height="17.80" fill="#ff0000"/><rect x="511.77" y="453.60" width="8.09" height="17.80" fill="#ff0000"/><rect x="521.56" y="453.60" width="8.09" height="17.80" fill="#ff0000"/><rect x="531.35" y="453.60" width="8.09" height="17.80" fill="#ff0000"/><rect x="541.14" y="453.60" width="8.09" height="17.80" fill="#ff0000"/><rect x="550.93" y="453.60" width="8.09" height="17.80" fill="#ff0000"/><rect x="560.72" y="453.60" width="8.09" height="17.80" fill="#ff0000"/><rect x="570.51" y="453.60" width="8.09" height="17.80" fill="#ff0000"/><rect x="580.30" y="453.60" width="8.09" height="17.80" fill="#ff0000"/><rect x="590.09" y="453.60" width="8.09" height="17.80" fill="#ff0000"/><rect x="599.88" y="453.60" width="8.09" height="17.80" fill="#ff0000"/><rect x="609.67" y="453.60" width="8.09" height="17.80" fill="#ff0000"/><rect x="619.46" y="453.60" width="8.09" height="17.80" fill="#ff0000"/><rect x="629.25" y="453.60" width="8.09" height="17.80" fill="#ff0000"/><rect x="639.04" y="453.60" width="8.09" height="17.80" fill="#ff0000"/><rect x="648.83" y="453.60" width="8.09" height="17.80" fill="#ff0000"/><rect x="658.62" y="453.60" width="8.09" height="17.80" fill="#ff0000"/><rect x="668.41" y="453.60" width="8.09" height="17.80" fill="#ff0000"/><rect x="678.20" y="453.60" width="8.09" height="17.80" fill="#ff0000"/><rect x="687.99" y="453.60" width="8.09" height="17.80" fill="#ff0000"/><rect x="697.78" y="453.60" width="8.09" height="17.80" fill="#ff0000"/><rect x="707.57" y="453.60" width="8.09" height="17.80" fill="#ff0000"/><rect x="717.36" y="453.60" width="8.09" height="17.80" fill="#ff0000"/><rect x="727.15" y="453.60" width="8.09" height="17.80" fill="#ff0000"/><rect x="736.94" y="453.60" width="8.09" height="17.80" fill="#ff0000"/><rect x="746.73" y="453.60" width="8.09" height="17.80" fill="#ff0000"/></svg>
<div class="t" style="left:248px;top:340.6px;font-size:10.6px">MON</div>
<div class="t" style="left:248px;top:360.1px;font-size:10.6px">TUE</div>
<div class="t" style="left:248px;top:379.6px;font-size:10.6px">WED</div>
<div class="t" style="left:248px;top:399.1px;font-size:10.6px">THU</div>
<div class="t" style="left:248px;top:418.6px;font-size:10.6px">FRI</div>
<div class="t" style="left:248px;top:438.1px;font-size:10.6px">SAT</div>
<div class="t" style="left:248px;top:457.6px;font-size:10.6px">SUN</div>
<div class="rb" style="left:228px;top:301px;width:567px;height:127px;border-width:3px"></div>
<div class="a" style="left:747px;top:147px;width:356px;height:252px;background:#c8c0e2"></div>
<div class="a" style="left:754px;top:154px;width:342px;height:239px;background:linear-gradient(#2c3e53,#1f2b39 50%,#161d27)"></div>
<div class="btn" style="left:771px;top:154px;width:72px;height:12px;line-height:11px;font-size:9.6px">Return</div>
<svg class="a" style="left:772px;top:167px" width="298" height="198" viewBox="0 0 298 198"><defs>
<pattern id="xh" width="4.85" height="4.85" patternUnits="userSpaceOnUse" x="0.5" y="0.5"><path d="M-1 -1 L5.85 5.85 M5.85 -1 L-1 5.85" stroke="#ff1010" stroke-width="0.7" opacity="0.9"/><circle cx="2.425" cy="2.425" r="0.8" fill="#ff0000"/><circle cx="0" cy="0" r="0.8" fill="#ff0000"/><circle cx="4.85" cy="0" r="0.8" fill="#ff0000"/><circle cx="0" cy="4.85" r="0.8" fill="#ff0000"/><circle cx="4.85" cy="4.85" r="0.8" fill="#ff0000"/></pattern>
<linearGradient id="bedg" x1="0" y1="0" x2="0.3" y2="1"><stop offset="0" stop-color="#d4a0b8"/><stop offset="0.45" stop-color="#cc6088"/><stop offset="1" stop-color="#c45484"/></linearGradient>
<linearGradient id="trg" x1="0" y1="0" x2="1" y2="0"><stop offset="0" stop-color="#98b8c8"/><stop offset="1" stop-color="#b0d4e4"/></linearGradient>
</defs><rect width="298" height="198" fill="#626a64"/><path d="M196 0 L298 0 L298 104 L259 114 L259 98 L168 98 L183 40 Z" fill="url(#trg)"/><path d="M206 0 L214 0 L196 34 L193 98 L182 98 L186 34 Z" fill="#e4c4bc"/><path d="M214 0 L228 0 L204 38 L203 70 L195 70 L196 34 Z" fill="#54585e"/><path d="M228 0 L262 0 L236 40 L216 68 L204 68 L204 38 Z" fill="#ecd8d4"/><path d="M238 0 L262 0 L250 16 L234 16 Z" fill="#ffffff"/><path d="M280 0 L292 0 L242 54 L220 76 L210 76 L232 52 Z" fill="#5c6c7a"/><path d="M298 4 L298 15 L268 42 L259 40 Z" fill="#5c6c7a"/><path d="M298 26 L298 37 L274 58 L266 55 Z" fill="#5c6c7a"/><path d="M185 70 L240 62 L259 60 L259 98 L168 98 Z" fill="#c8b8b8"/><path d="M259 72 L298 60 L298 104 L259 114 Z" fill="#b8b4bc"/><path d="M168 98 L240 98 L222 188 L213 198 L203 198 L168 118 Z" fill="#d6c6be"/><path d="M190 66 L240 63 L238 98 L175 98 Z" fill="#d0bcb8"/><path d="M0 43 L30 60 L60 79 L90 98 L128 112 L150 120 L168 118 L203 198 L0 198 Z" fill="url(#bedg)"/><path d="M0 43 L30 60 L60 79 L90 98 L49 98 L56 120 L0 100 Z" fill="#d4b0b8"/><path d="M49 98 L90 98 L150 118 L155 130 L172 178 L102 178 L85 173 L72 154 L56 120 Z" fill="#d8a4b0"/><path d="M148 118 L168 118 L203 198 L178 198 Z" fill="#c45070"/><path d="M90 98 L110 92 L140 95 L158 100 L168 120 L150 125 L128 112 Z" fill="#4a4a46"/><path d="M122 96 L140 90 L148 100 L135 108 Z" fill="#4a8a3a"/><path d="M240 63 L252 61 L259 98 L259 198 L228 198 L222 188 Z" fill="#7a5a62"/><path d="M247 61 L255 60 L257 72 L249 72 Z" fill="#f4f4f4"/><path d="M259 114 L298 104 L298 198 L259 198 Z" fill="#0c0c28"/><path d="M1 35 L6 34 L28 55 L25 58 Z" fill="#ffffff"/><path d="M88 55 L93 54 L100 72 L96 74 Z" fill="#ffffff"/><path d="M104 60 L110 61 L112 77 L107 77 Z" fill="#f8f8f8"/><path d="M88 0 L110 0 L110 5 L90 5 Z" fill="#f8f0e8"/><path d="M168 91 L181 78 L184 82 L171 95 Z" fill="#ffffff"/><path d="M258 95 L298 78 L298 82 L260 98 Z" fill="#f0f0f0"/><path d="M128 28 L149 30 L149 40 L132 38 Z" fill="#2a2a2a"/><rect x="0" y="0" width="60" height="13" fill="#202020"/><rect width="298" height="198" fill="url(#xh)"/><text x="0.5" y="6" font-family="Liberation Mono" font-size="5" fill="#f4e8e8" font-weight="bold">2014-07-31 13:46:22</text><text x="0.5" y="11.5" font-family="Liberation Mono" font-size="5" fill="#f4e8e8" font-weight="bold">FI9831W</text><line x1="29.5" y1="0" x2="29.5" y2="198" stroke="#1c1cf4" stroke-width="1.2"/><line x1="59.5" y1="0" x2="59.5" y2="198" stroke="#1c1cf4" stroke-width="1.2"/><line x1="89.5" y1="0" x2="89.5" y2="198" stroke="#1c1cf4" stroke-width="1.2"/><line x1="119.5" y1="0" x2="119.5" y2="198" stroke="#1c1cf4" stroke-width="1.2"/><line x1="148.5" y1="0" x2="148.5" y2="198" stroke="#1c1cf4" stroke-width="1.2"/><line x1="178.5" y1="0" x2="178.5" y2="198" stroke="#1c1cf4" stroke-width="1.2"/><line x1="208.5" y1="0" x2="208.5" y2="198" stroke="#1c1cf4" stroke-width="1.2"/><line x1="238.5" y1="0" x2="238.5" y2="198" stroke="#1c1cf4" stroke-width="1.2"/><line x1="268.5" y1="0" x2="268.5" y2="198" stroke="#1c1cf4" stroke-width="1.2"/><line x1="0" y1="19.5" x2="298" y2="19.5" stroke="#1c1cf4" stroke-width="1.2"/><line x1="0" y1="39.5" x2="298" y2="39.5" stroke="#1c1cf4" stroke-width="1.2"/><line x1="0" y1="59.5" x2="298" y2="59.5" stroke="#1c1cf4" stroke-width="1.2"/><line x1="0" y1="79.5" x2="298" y2="79.5" stroke="#1c1cf4" stroke-width="1.2"/><line x1="0" y1="98.5" x2="298" y2="98.5" stroke="#1c1cf4" stroke-width="1.2"/><line x1="0" y1="118.5" x2="298" y2="118.5" stroke="#1c1cf4" stroke-width="1.2"/><line x1="0" y1="138.5" x2="298" y2="138.5" stroke="#1c1cf4" stroke-width="1.2"/><line x1="0" y1="158.5" x2="298" y2="158.5" stroke="#1c1cf4" stroke-width="1.2"/><line x1="0" y1="178.5" x2="298" y2="178.5" stroke="#1c1cf4" stroke-width="1.2"/></svg>
<div class="a" style="left:1103px;top:151px;width:8px;height:1px;background:#a0a8b0"></div>
<div class="a" style="left:1103px;top:397px;width:8px;height:1px;background:#a0a8a8"></div>
<div class="a" style="left:923px;top:91px;width:14px;height:13px;background:linear-gradient(#e8e8e8,#a8a8a8)"></div>
<svg class="a" style="left:924px;top:93px" width="12" height="9" viewBox="0 0 12 9"><path d="M2 2 L6 6 L10 2" fill="none" stroke="#f8f8f8" stroke-width="1.6"/></svg>
<div class="t" style="left:945px;top:91px;font-size:13.8px;font-weight:bold;color:#f4f4f4">default</div>
<div class="a" style="left:927px;top:104px;width:184px;height:26px;background:#0000ff"></div>
<svg class="a" style="left:927px;top:105px" width="24" height="24" viewBox="0 0 24 24"><ellipse cx="8" cy="9" rx="6" ry="4" fill="#e0e0e0"/><circle cx="5" cy="9" r="2.5" fill="#404040"/><path d="M9 13 V20 M5 21 H12" stroke="#303030" stroke-width="1.5"/><path d="M10 2 V6" stroke="#202020" stroke-width="1"/><path d="M17 3 H21 V7 M17 22 H21 V18" fill="none" stroke="#f0f0f0" stroke-width="1.6"/></svg>
<div class="t" style="left:957px;top:106px;font-size:11.5px;color:#f4f4f4">FI9831W</div>
<div class="t" style="left:966px;top:120px;font-size:11.6px;color:#8c8cd4">192.168.11.203</div>
<div class="rb" style="left:887px;top:77px;width:185px;height:66px;border-width:2px"></div>
<div class="rb" style="left:303px;top:14px;width:73px;height:60px;border-width:3px 2px"></div>
<div class="rb" style="left:93px;top:61px;width:108px;height:37px;border-width:2px"></div>
<div class="rb" style="left:3px;top:179px;width:195px;height:40px;border-width:2px"></div>
<div class="rb" style="left:263px;top:120px;width:102px;height:34px;border-width:2px"></div>
<div class="rb" style="left:376px;top:241px;width:146px;height:37px;border-width:2px"></div>
<div class="rb" style="left:587px;top:81px;width:138px;height:46px;border-width:3px 2px"></div>
<div class="rb" style="left:502px;top:80px;width:77px;height:47px;border-width:3px 2px"></div>
<svg class="a" style="left:0;top:0" width="1112" height="592"><line x1="724" y1="105" x2="782" y2="151" stroke="#ff1c24" stroke-width="2.5"/></svg>
<div class="rn" style="left:868px;top:78px">1</div>
<div class="rn" style="left:284px;top:14px">2</div>
<div class="rn" style="left:78px;top:58px">3</div>
<div class="rn" style="left:20px;top:170px">4</div>
<div class="rn" style="left:224px;top:126px">5</div>
<div class="rn" style="left:354px;top:233px">6</div>
<div class="rn" style="left:245px;top:286px">7</div>
<div class="rn" style="left:604px;top:109px">8</div>
<div class="rn" style="left:532px;top:101px">9</div>
</body></html>
